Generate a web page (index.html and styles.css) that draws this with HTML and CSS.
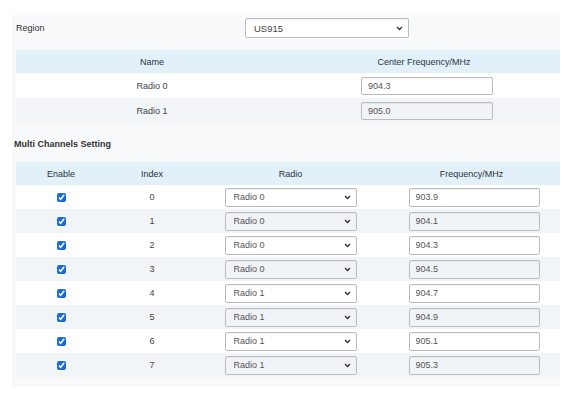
FILE: index.html
```html
<!DOCTYPE html>
<html>
<head>
<meta charset="utf-8">
<link rel="stylesheet" href="styles.css">
</head>
<body>
<div class="panel">
  <div class="region-row">
    <div class="region-label">Region</div>
    <div class="sel sel-region">
      <select><option>US915</option></select>
      <svg class="chev" width="7" height="5" viewBox="0 0 7 5"><path d="M1 1l2.5 2.5L6 1" fill="none" stroke="#333" stroke-width="1.4"/></svg>
    </div>
  </div>

  <table class="tbl t1">
    <thead><tr><th>Name</th><th>Center Frequency/MHz</th></tr></thead>
    <tbody>
      <tr><td>Radio 0</td><td><input class="inp" value="904.3"></td></tr>
      <tr><td>Radio 1</td><td><input class="inp" value="905.0"></td></tr>
    </tbody>
  </table>

  <div class="section-title">Multi Channels Setting</div>

  <table class="tbl t2">
    <colgroup><col class="c1"><col class="c2"><col class="c3"><col class="c4"></colgroup>
    <thead><tr><th>Enable</th><th>Index</th><th>Radio</th><th>Frequency/MHz</th></tr></thead>
    <tbody>
      <tr><td><input type="checkbox" class="cb" checked></td><td class="idx">0</td><td><div class="sel sel-row"><select><option>Radio 0</option></select><svg class="chev" width="7" height="5" viewBox="0 0 7 5"><path d="M1 1l2.5 2.5L6 1" fill="none" stroke="#333" stroke-width="1.4"/></svg></div></td><td><input class="inp inp2" value="903.9"></td></tr>
      <tr><td><input type="checkbox" class="cb" checked></td><td class="idx">1</td><td><div class="sel sel-row"><select><option>Radio 0</option></select><svg class="chev" width="7" height="5" viewBox="0 0 7 5"><path d="M1 1l2.5 2.5L6 1" fill="none" stroke="#333" stroke-width="1.4"/></svg></div></td><td><input class="inp inp2" value="904.1"></td></tr>
      <tr><td><input type="checkbox" class="cb" checked></td><td class="idx">2</td><td><div class="sel sel-row"><select><option>Radio 0</option></select><svg class="chev" width="7" height="5" viewBox="0 0 7 5"><path d="M1 1l2.5 2.5L6 1" fill="none" stroke="#333" stroke-width="1.4"/></svg></div></td><td><input class="inp inp2" value="904.3"></td></tr>
      <tr><td><input type="checkbox" class="cb" checked></td><td class="idx">3</td><td><div class="sel sel-row"><select><option>Radio 0</option></select><svg class="chev" width="7" height="5" viewBox="0 0 7 5"><path d="M1 1l2.5 2.5L6 1" fill="none" stroke="#333" stroke-width="1.4"/></svg></div></td><td><input class="inp inp2" value="904.5"></td></tr>
      <tr><td><input type="checkbox" class="cb" checked></td><td class="idx">4</td><td><div class="sel sel-row"><select><option>Radio 1</option></select><svg class="chev" width="7" height="5" viewBox="0 0 7 5"><path d="M1 1l2.5 2.5L6 1" fill="none" stroke="#333" stroke-width="1.4"/></svg></div></td><td><input class="inp inp2" value="904.7"></td></tr>
      <tr><td><input type="checkbox" class="cb" checked></td><td class="idx">5</td><td><div class="sel sel-row"><select><option>Radio 1</option></select><svg class="chev" width="7" height="5" viewBox="0 0 7 5"><path d="M1 1l2.5 2.5L6 1" fill="none" stroke="#333" stroke-width="1.4"/></svg></div></td><td><input class="inp inp2" value="904.9"></td></tr>
      <tr><td><input type="checkbox" class="cb" checked></td><td class="idx">6</td><td><div class="sel sel-row"><select><option>Radio 1</option></select><svg class="chev" width="7" height="5" viewBox="0 0 7 5"><path d="M1 1l2.5 2.5L6 1" fill="none" stroke="#333" stroke-width="1.4"/></svg></div></td><td><input class="inp inp2" value="905.1"></td></tr>
      <tr><td><input type="checkbox" class="cb" checked></td><td class="idx">7</td><td><div class="sel sel-row"><select><option>Radio 1</option></select><svg class="chev" width="7" height="5" viewBox="0 0 7 5"><path d="M1 1l2.5 2.5L6 1" fill="none" stroke="#333" stroke-width="1.4"/></svg></div></td><td><input class="inp inp2" value="905.3"></td></tr>
    </tbody>
  </table>
</div>
</body>
</html>
```
FILE: styles.css
```css
* { box-sizing: border-box; }
html, body { margin: 0; padding: 0; background: #ffffff; }
body {
  font-family: "Liberation Sans", Arial, sans-serif;
  font-size: 9px;
  color: #444;
}
.panel {
  margin: 15px 0 0 12px;
  width: 548px;
  background: #f8f9fa;
  padding: 3px 0 10px 4px;
}
.region-row {
  display: flex;
  align-items: center;
  height: 20px;
  margin-bottom: 12px;
}
.region-label {
  width: 229px;
  color: #333;
  font-size: 9px;
}
.sel {
  position: relative;
  display: inline-block;
}
.sel select {
  appearance: none;
  -webkit-appearance: none;
  width: 100%;
  height: 100%;
  margin: 0;
  border: 1px solid #b9bdc2;
  border-radius: 2px;
  background: #fff;
  font-family: "Liberation Sans", Arial, sans-serif;
  font-size: 9px;
  color: #555;
  padding: 0 0 0 8px;
  box-shadow: inset 0 1px 1px rgba(0,0,0,0.05);
}
.sel-region { width: 164px; height: 20px; }
.sel-region select { font-size: 9.5px; color: #444; }
.chev {
  position: absolute;
  right: 6px;
  top: 50%;
  margin-top: -2px;
  pointer-events: none;
}
.tbl {
  width: 544px;
  border-collapse: collapse;
  table-layout: fixed;
}
.tbl th {
  background: #e1f0f9;
  height: 23px;
  font-weight: normal;
  color: #2a343e;
  font-size: 9px;
  text-align: center;
  padding: 0;
}
.tbl td {
  text-align: center;
  padding: 0;
  color: #444;
  font-size: 9px;
}
.t1 td { height: 25px; }
.t2 td { height: 24px; }
.tbl tbody tr:nth-child(odd) td { background: #ffffff; }
.tbl tbody tr:nth-child(even) td { background: #f1f5f8; }
.inp {
  width: 132px;
  height: 18px;
  margin: 0;
  border: 1px solid #b9bdc2;
  border-radius: 2px;
  background: #fff;
  font-family: "Liberation Sans", Arial, sans-serif;
  font-size: 9px;
  color: #555;
  padding: 0 0 0 6px;
  vertical-align: middle;
  box-shadow: inset 0 1px 1px rgba(0,0,0,0.05);
}
.tbl tbody tr:nth-child(even) .inp,
.tbl tbody tr:nth-child(even) .sel select { background: #f1f4f7; }
.t1 .inp { margin-left: 6px; }
.section-title {
  height: 39px;
  line-height: 42px;
  font-weight: bold;
  color: #333;
  font-size: 9px;
  margin-left: -2px;
}
.t2 .c1 { width: 90px; }
.t2 .c2 { width: 92px; }
.t2 .c3 { width: 185px; }
.t2 .c4 { width: 177px; }
.cb {
  width: 9px;
  height: 9px;
  margin: 0;
  accent-color: #1a6ad4;
  vertical-align: middle;
}
.idx { color: #333; }
.sel-row { width: 132px; height: 19px; vertical-align: middle; margin-left: 0; }
.inp2 { height: 19px; width: 131px; margin-left: 5px; }
```
